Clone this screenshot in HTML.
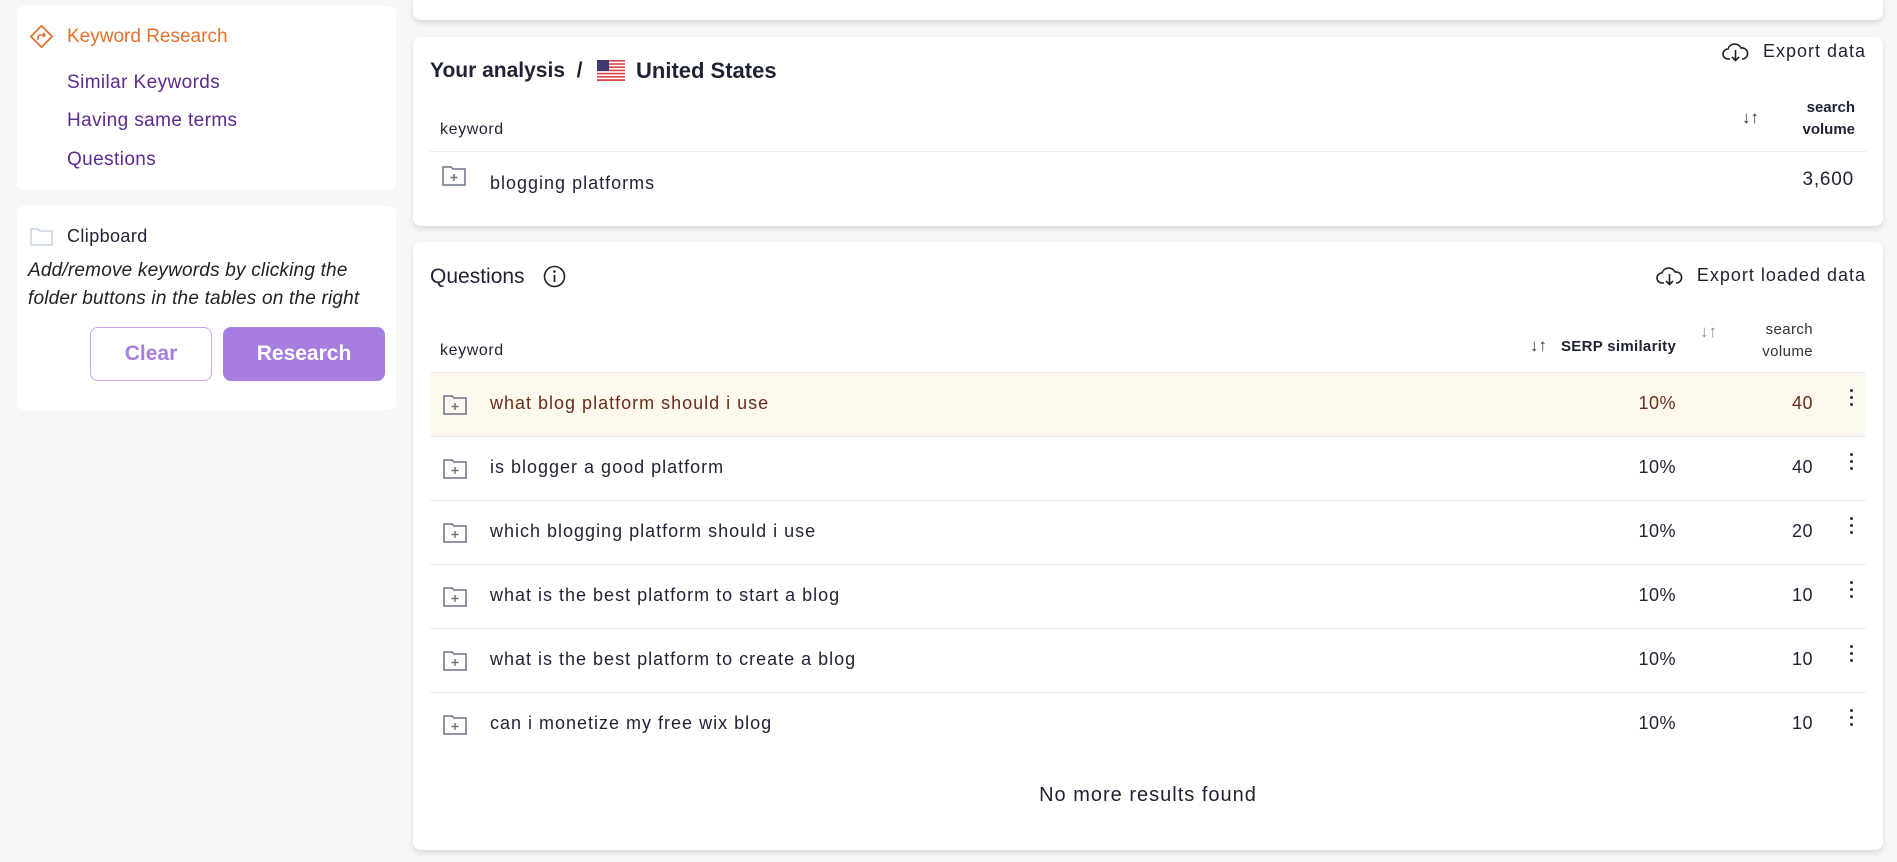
<!DOCTYPE html>
<html><head><meta charset="utf-8"><style>
*{box-sizing:border-box;margin:0;padding:0}
body{width:1897px;height:862px;background:#f6f7f9;font-family:"Liberation Sans",sans-serif;color:#1f2233;position:relative;overflow:hidden}
.card{position:absolute;background:#fff;border-radius:8px}
.sh{box-shadow:0 3px 6px rgba(0,0,0,.12)}
.abs{position:absolute;white-space:nowrap}
.nav{left:67px;font-size:19px;letter-spacing:.4px;color:#5b2a8c}
.row{position:absolute;left:17px;width:1436px;height:64px;border-bottom:1px solid #ececf0}
.row .t{position:absolute;left:60px;top:20px;font-size:18px;letter-spacing:1px}
.row .p{position:absolute;right:190px;top:20px;font-size:18px;letter-spacing:.5px}
.row .v{position:absolute;right:53px;top:20px;font-size:18px;letter-spacing:.5px}
.row .k{position:absolute;right:12px;top:16px;width:4px}
.row .k i{display:block;width:3px;height:3px;background:#333;border-radius:50%;margin-bottom:4px}
.fold{position:absolute;left:13px;top:22px}
</style></head><body>
<div class="card" style="left:17px;top:6px;width:379px;height:184px"></div>
<svg class="abs" style="left:28px;top:23px" width="27" height="27" viewBox="0 0 27 27"><rect x="6" y="6" width="15" height="15" transform="rotate(45 13.5 13.5)" fill="none" stroke="#e0732e" stroke-width="1.8"/><path d="M10 17v-3a2 2 0 0 1 2-2h5M15 10l2 2-2 2" fill="none" stroke="#e0732e" stroke-width="1.6"/></svg>
<div class="abs" style="left:67px;top:26px;font-size:19px;color:#e0732e">Keyword Research</div>
<div class="abs nav" style="top:72px">Similar Keywords</div>
<div class="abs nav" style="top:110px">Having same terms</div>
<div class="abs nav" style="top:149px">Questions</div>
<div class="card" style="left:17px;top:206px;width:379px;height:204px"></div>
<svg class="abs" style="left:30px;top:227px" width="23" height="19" viewBox="0 0 23 19"><path d="M1 2h7l2 2h12v14H1z" fill="none" stroke="#c9d3e0" stroke-width="1.5"/></svg>
<div class="abs" style="left:67px;top:226px;font-size:18px;letter-spacing:.4px;color:#1f2233">Clipboard</div>
<div class="abs" style="left:28px;top:257px;font-size:19px;letter-spacing:.2px;font-style:italic;line-height:28px;color:#222">Add/remove keywords by clicking the<br>folder buttons in the tables on the right</div>
<div class="abs" style="left:90px;top:327px;width:122px;height:54px;border:1.5px solid #c9a6ec;border-radius:8px;color:#a77ddf;font-size:21px;font-weight:bold;text-align:center;line-height:51px">Clear</div>
<div class="abs" style="left:223px;top:327px;width:162px;height:54px;background:#a77ddf;border-radius:8px;color:#fff;font-size:21px;font-weight:bold;text-align:center;line-height:54px">Research</div>
<div class="card sh" style="left:413px;top:-10px;width:1470px;height:30px"></div>
<div class="card sh" style="left:413px;top:37px;width:1470px;height:189px">
 <div class="abs" style="left:17px;top:22px;font-size:21px;font-weight:bold">Your analysis &nbsp;/</div>
 <svg class="abs" style="left:184px;top:23px" width="28" height="21" viewBox="0 0 28 21"><rect width="28" height="21" fill="#fff"/><g fill="#d9434b"><rect y="0" width="28" height="1.6"/><rect y="3.2" width="28" height="1.6"/><rect y="6.4" width="28" height="1.6"/><rect y="9.6" width="28" height="1.6"/><rect y="12.8" width="28" height="1.6"/><rect y="16" width="28" height="1.6"/><rect y="19.2" width="28" height="1.8"/></g><rect width="12" height="11" fill="#3c3b6e"/></svg>
 <div class="abs" style="left:223px;top:21px;font-size:22px;font-weight:bold">United States</div>
 <div class="abs" style="right:17px;top:4px;font-size:18px;letter-spacing:1px;display:flex;align-items:center;gap:14px"><svg width="27" height="20" viewBox="0 0 27 20"><path d="M8 17H6a5 5 0 0 1 0-10 7 7 0 0 1 13-1 5 5 0 0 1 2 11h-1" fill="none" stroke="#222" stroke-width="1.6"/><path d="M13.5 8v10M10 15l3.5 3.5L17 15" fill="none" stroke="#222" stroke-width="1.6"/></svg>Export data</div>
 <div class="abs" style="left:27px;top:84px;font-size:16px;letter-spacing:.6px">keyword</div>
 <div class="abs" style="left:1329px;top:71px;font-size:17px;color:#333">↓↑</div>
 <div class="abs" style="right:28px;top:60px;font-size:15px;text-align:right;line-height:22px;font-weight:bold">search<br>volume</div>
 <div class="abs" style="left:17px;top:114px;width:1436px;border-top:1px solid #ececf0"></div>
 <svg class="abs" style="left:29px;top:129px" width="24" height="20" viewBox="0 0 24 20"><path d="M1 1h8l2 2h12v16H1z" fill="none" stroke="#6b7387" stroke-width="1.5"/><path d="M12 8v7M8.5 11.5h7" stroke="#6b7387" stroke-width="1.5"/></svg>
 <div class="abs" style="left:77px;top:136px;font-size:18px;letter-spacing:1px">blogging platforms</div>
 <div class="abs" style="right:29px;top:132px;font-size:19px;letter-spacing:.8px">3,600</div>
</div>
<div class="card sh" style="left:413px;top:242px;width:1470px;height:608px">
 <div class="abs" style="left:17px;top:23px;font-size:21px">Questions</div>
 <svg class="abs" style="left:130px;top:23px" width="23" height="23" viewBox="0 0 23 23"><circle cx="11.5" cy="11.5" r="10" fill="none" stroke="#222" stroke-width="1.6"/><circle cx="11.5" cy="6.5" r="1.3" fill="#222"/><path d="M11.5 10v7" stroke="#222" stroke-width="1.8"/></svg>
 <div class="abs" style="right:17px;top:23px;font-size:18px;letter-spacing:1px;display:flex;align-items:center;gap:14px"><svg width="27" height="20" viewBox="0 0 27 20"><path d="M8 17H6a5 5 0 0 1 0-10 7 7 0 0 1 13-1 5 5 0 0 1 2 11h-1" fill="none" stroke="#222" stroke-width="1.6"/><path d="M13.5 8v10M10 15l3.5 3.5L17 15" fill="none" stroke="#222" stroke-width="1.6"/></svg>Export loaded data</div>
 <div class="abs" style="left:27px;top:100px;font-size:16px;letter-spacing:.6px">keyword</div>
 <div class="abs" style="left:1117px;top:94px;font-size:17px;color:#333">↓↑</div>
 <div class="abs" style="left:1148px;top:96px;font-size:15px;font-weight:bold;letter-spacing:.3px">SERP similarity</div>
 <div class="abs" style="left:1287px;top:80px;font-size:17px;color:#8a90a0">↓↑</div>
 <div class="abs" style="right:70px;top:77px;font-size:15px;letter-spacing:.4px;text-align:right;line-height:22px;color:#333">search<br>volume</div>
 <div class="abs" style="left:17px;top:130px;width:1436px;border-top:1px solid #ececf0"></div>
 <div class="row" style="top:131px;background:#fef9ee;color:#6b2d1a"><svg class="fold" width="24" height="20" viewBox="0 0 24 20"><path d="M1 1h8l2 2h12v16H1z" fill="none" stroke="#6b7387" stroke-width="1.5"/><path d="M12 8v7M8.5 11.5h7" stroke="#6b7387" stroke-width="1.5"/></svg><div class="t">what blog platform should i use</div><div class="p">10%</div><div class="v">40</div><div class="k"><i></i><i></i><i></i></div></div>
 <div class="row" style="top:195px"><svg class="fold" width="24" height="20" viewBox="0 0 24 20"><path d="M1 1h8l2 2h12v16H1z" fill="none" stroke="#6b7387" stroke-width="1.5"/><path d="M12 8v7M8.5 11.5h7" stroke="#6b7387" stroke-width="1.5"/></svg><div class="t">is blogger a good platform</div><div class="p">10%</div><div class="v">40</div><div class="k"><i></i><i></i><i></i></div></div>
 <div class="row" style="top:259px"><svg class="fold" width="24" height="20" viewBox="0 0 24 20"><path d="M1 1h8l2 2h12v16H1z" fill="none" stroke="#6b7387" stroke-width="1.5"/><path d="M12 8v7M8.5 11.5h7" stroke="#6b7387" stroke-width="1.5"/></svg><div class="t">which blogging platform should i use</div><div class="p">10%</div><div class="v">20</div><div class="k"><i></i><i></i><i></i></div></div>
 <div class="row" style="top:323px"><svg class="fold" width="24" height="20" viewBox="0 0 24 20"><path d="M1 1h8l2 2h12v16H1z" fill="none" stroke="#6b7387" stroke-width="1.5"/><path d="M12 8v7M8.5 11.5h7" stroke="#6b7387" stroke-width="1.5"/></svg><div class="t">what is the best platform to start a blog</div><div class="p">10%</div><div class="v">10</div><div class="k"><i></i><i></i><i></i></div></div>
 <div class="row" style="top:387px"><svg class="fold" width="24" height="20" viewBox="0 0 24 20"><path d="M1 1h8l2 2h12v16H1z" fill="none" stroke="#6b7387" stroke-width="1.5"/><path d="M12 8v7M8.5 11.5h7" stroke="#6b7387" stroke-width="1.5"/></svg><div class="t">what is the best platform to create a blog</div><div class="p">10%</div><div class="v">10</div><div class="k"><i></i><i></i><i></i></div></div>
 <div class="row" style="top:451px;border-bottom:none"><svg class="fold" width="24" height="20" viewBox="0 0 24 20"><path d="M1 1h8l2 2h12v16H1z" fill="none" stroke="#6b7387" stroke-width="1.5"/><path d="M12 8v7M8.5 11.5h7" stroke="#6b7387" stroke-width="1.5"/></svg><div class="t">can i monetize my free wix blog</div><div class="p">10%</div><div class="v">10</div><div class="k"><i></i><i></i><i></i></div></div>
 <div class="abs" style="left:0;width:1470px;text-align:center;top:542px;font-size:20px;letter-spacing:1px">No more results found</div>
</div>
</body></html>
